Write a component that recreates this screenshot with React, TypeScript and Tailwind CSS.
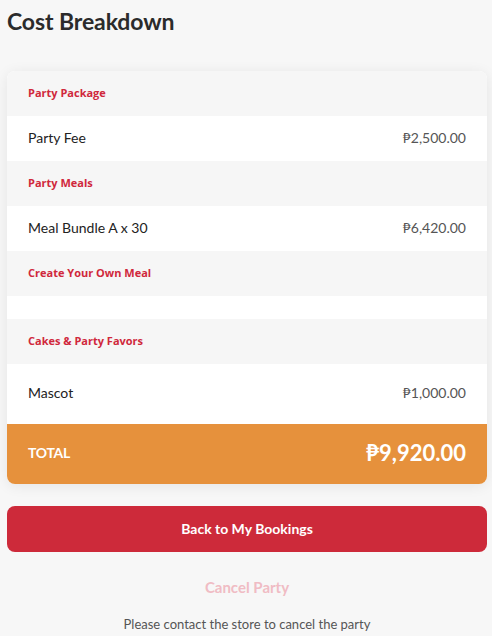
const sections: { title: string; items: { name: string; price: string }[]; emptyRow?: boolean; tall?: boolean }[] = [
  { title: "Party Package", items: [{ name: "Party Fee", price: "₱2,500.00" }] },
  { title: "Party Meals", items: [{ name: "Meal Bundle A x 30", price: "₱6,420.00" }] },
  { title: "Create Your Own Meal", items: [], emptyRow: true },
  { title: "Cakes & Party Favors", items: [{ name: "Mascot", price: "₱1,000.00" }], tall: true },
];

export default function App() {
  return (
    <div className="min-h-screen w-[492px] bg-[#f7f7f7] pl-[7px] pr-[5px] font-['Lato',sans-serif] text-[#333]">
      <h1 className="pt-[7px] text-[23px] font-bold leading-[28px] tracking-[-0.1px] text-[#2b2b2b]">
        Cost Breakdown
      </h1>

      {/* Breakdown card */}
      <div className="mt-[36px] overflow-hidden rounded-[8px] bg-white shadow-[0_2px_14px_rgba(0,0,0,0.08)]">
        {sections.map((s) => (
          <div key={s.title}>
            <div className="flex h-[45px] items-center bg-[#f6f6f6] px-[21px] font-['Open_Sans',sans-serif] text-[11px] font-bold text-[#d0283c]">
              {s.title}
            </div>
            {s.emptyRow && <div className="h-[23px] bg-white" />}
            {s.items.map((it) => (
              <div
                key={it.name}
                className={`flex items-center justify-between bg-white px-[21px] pb-[3px] ${s.tall ? "h-[60px]" : "h-[45px]"}`}
              >
                <span className="text-[14px] text-[#222]">{it.name}</span>
                <span className="text-[14px] text-[#555]">{it.price}</span>
              </div>
            ))}
          </div>
        ))}

        <div className="flex h-[60px] items-center justify-between bg-[#e6913c] px-[21px] pb-[3px] text-white">
          <span className="text-[14px] font-bold tracking-[-0.3px]">TOTAL</span>
          <span className="text-[22px] font-bold">₱9,920.00</span>
        </div>
      </div>

      <button className="mt-[22px] flex h-[46px] w-full items-center justify-center rounded-[8px] bg-[#cd2a3a] pb-[2px] text-[14px] font-bold text-white">
        Back to My Bookings
      </button>

      <div className="mt-[24px] text-center text-[15px] font-bold text-[#f0bcc4]">Cancel Party</div>

      <p className="mt-[16px] text-center text-[13px] text-[#555]">
        Please contact the store to cancel the party
      </p>
    </div>
  );
}
